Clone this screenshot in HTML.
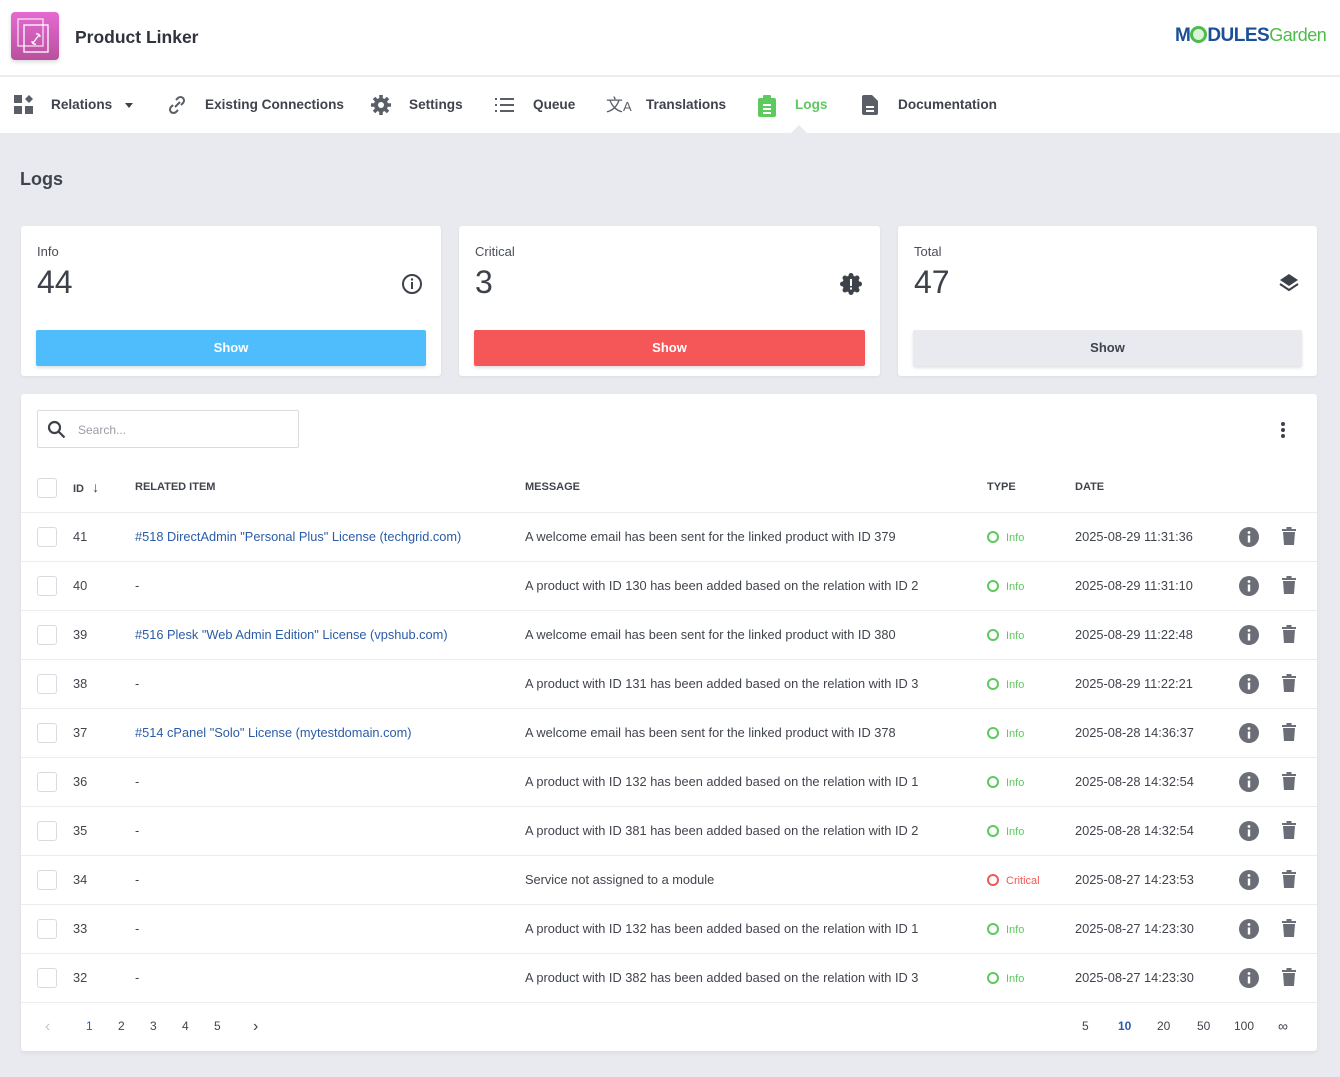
<!DOCTYPE html>
<html><head><meta charset="utf-8">
<style>
*{box-sizing:border-box;margin:0;padding:0}
body{width:1340px;height:1077px;background:#e9eaef;font-family:"Liberation Sans",sans-serif;color:#40444d;position:relative;overflow:hidden}
.abs{position:absolute}
.top{position:absolute;left:0;top:0;width:1340px;height:76px;background:#fff;border-bottom:1px solid #eceef1}
.nav{position:absolute;left:0;top:77px;width:1340px;height:56px;background:#fff}
.nav .it{position:absolute;top:0;height:56px;line-height:55px;font-size:13.6px;font-weight:bold;color:#3f434c}
.nav svg{position:absolute;top:18px}
.card{position:absolute;top:226px;height:150px;background:#fff;border-radius:3px;box-shadow:0 1px 3px rgba(0,0,0,.06)}
.card .lbl{position:absolute;left:16px;top:18px;font-size:13px;color:#4a4e57}
.card .num{position:absolute;left:16px;top:38px;font-size:32px;font-weight:300;color:#3d414a}
.card .btn{position:absolute;left:15px;right:15px;top:104px;height:36px;border-radius:2px;text-align:center;line-height:36px;font-size:13px;font-weight:bold;box-shadow:0 2px 3px rgba(0,0,0,.12)}
.card .ic{position:absolute;right:18px;top:47px}
.panel{position:absolute;left:21px;top:394px;width:1296px;height:657px;background:#fff;border-radius:3px;box-shadow:0 2px 4px rgba(0,0,0,.06)}
.row{position:absolute;left:0;width:1296px;height:49px;border-top:1px solid #ebecef;font-size:12.8px;color:#40444d}
.row span,.hdr span{position:absolute;top:0;line-height:47px;white-space:nowrap}
.cb{position:absolute;left:16px;top:14px;width:20px;height:20px;border:1px solid #d9dbe0;border-radius:3px;background:#fff}
.hdr{position:absolute;left:0;top:70px;width:1296px;height:49px;font-size:11px;font-weight:bold;color:#40444d}
a{color:#2b5ca8;text-decoration:none}
.dot{display:inline-block;width:12px;height:12px;border:2px solid #5dc95e;border-radius:50%;vertical-align:-2px;margin-right:7px}
.row span.ty{font-size:11px;color:#5dc95e;top:2px}
.crit .dot{border-color:#f35858}.row span.crit{color:#f35858}
.pg{position:absolute;top:608px;font-size:12px;color:#3f434c;line-height:49px}
</style></head><body>
<div class="top">
  <div class="abs" style="left:11px;top:12px;width:48px;height:48px;border-radius:4px;background:linear-gradient(#e46ad0,#b9509f);box-shadow:0 2px 4px rgba(0,0,0,.15)">
    <svg width="48" height="48" viewBox="0 0 48 48"><rect x="7" y="7" width="25" height="27" fill="none" stroke="#fff" stroke-width="1.3" opacity=".8"/><rect x="13" y="13" width="24" height="27" fill="none" stroke="#fff" stroke-width="1.3"/><path d="M22 31l6-8M21 29a3 3 0 0 0 4 3M29 25a3 3 0 0 0-4-3" stroke="#fff" stroke-width="1.3" fill="none"/></svg>
  </div>
  <div class="abs" style="left:75px;top:27px;font-size:17.5px;font-weight:bold;color:#2f333b">Product Linker</div>
  <div class="abs" style="left:1175px;top:25px;font-size:19px;font-weight:bold;color:#1b4f97;letter-spacing:-.5px">M<span style="display:inline-block;width:17px;height:17px;border:3px solid #4dbd4a;border-radius:50%;vertical-align:-2px;background:#4dbd4a33"></span>DULES<span style="font-weight:normal;color:#4dbd4a;font-size:18px">Garden</span></div>
</div>
<div class="nav">
  <svg style="left:14px" width="20" height="20" viewBox="0 0 20 20" fill="#5a5e66"><rect x="0" y="0" width="8" height="8"/><rect x="0" y="11" width="8" height="8"/><rect x="11" y="11" width="8" height="8"/><path d="M15 0l4 4-4 4-4-4z"/></svg>
  <div class="it" style="left:51px">Relations</div>
  <div class="abs" style="left:125px;top:26px;border:4px solid transparent;border-top:5px solid #3f434c"></div>
  <svg style="left:167px" width="20" height="20" viewBox="0 0 20 20" fill="none" stroke="#5a5e66" stroke-width="2"><path d="M8 12l5-5M9 5l2-2a3.5 3.5 0 0 1 5 5l-2 2M11 15l-2 2a3.5 3.5 0 0 1-5-5l2-2"/></svg>
  <div class="it" style="left:205px">Existing Connections</div>
  <svg style="left:371px" width="20" height="20" viewBox="0 0 20 20"><circle cx="10" cy="10" r="7" fill="#5a5e66"/><g stroke="#5a5e66" stroke-width="3.5"><path d="M10 0v20M0 10h20M3 3l14 14M17 3L3 17"/></g><circle cx="10" cy="10" r="3" fill="#fff"/></svg>
  <div class="it" style="left:409px">Settings</div>
  <svg style="left:495px" width="20" height="20" viewBox="0 0 20 20" fill="#5a5e66"><rect x="0" y="3" width="2" height="2"/><rect x="0" y="9" width="2" height="2"/><rect x="0" y="15" width="2" height="2"/><rect x="5" y="3" width="14" height="2"/><rect x="5" y="9" width="14" height="2"/><rect x="5" y="15" width="14" height="2"/></svg>
  <div class="it" style="left:533px">Queue</div>
  <div class="abs" style="left:606px;top:14px;font-size:17px;color:#5a5e66">文<span style="font-size:13px">A</span></div>
  <div class="it" style="left:646px">Translations</div>
  <svg style="left:758px" width="18" height="22" viewBox="0 0 18 22"><rect x="0" y="3" width="18" height="19" rx="2" fill="#5dc95e"/><rect x="5" y="0" width="8" height="5" rx="1" fill="#5dc95e"/><g fill="#fff"><rect x="5" y="9" width="8" height="2"/><rect x="5" y="13" width="8" height="2"/><rect x="5" y="17" width="8" height="2"/></g></svg>
  <div class="it" style="left:795px;color:#5dc95e">Logs</div>
  <div class="abs" style="left:791px;top:48px;border:8px solid transparent;border-bottom:8px solid #e9eaef;border-top:0"></div>
  <svg style="left:862px" width="16" height="20" viewBox="0 0 16 20"><path d="M0 2a2 2 0 0 1 2-2h8l6 6v12a2 2 0 0 1-2 2H2a2 2 0 0 1-2-2z" fill="#5a5e66"/><g fill="#fff"><rect x="4" y="11" width="8" height="2"/><rect x="4" y="15" width="8" height="2"/></g></svg>
  <div class="it" style="left:898px">Documentation</div>
</div>
<div class="abs" style="left:20px;top:169px;font-size:18px;font-weight:bold;color:#3f434c">Logs</div>

<div class="card" style="left:21px;width:420px"><div class="lbl">Info</div><div class="num">44</div>
<svg class="ic" width="22" height="22" viewBox="0 0 22 22"><circle cx="11" cy="11" r="9" fill="none" stroke="#3d414a" stroke-width="2"/><rect x="10" y="9" width="2" height="7" fill="#3d414a"/><circle cx="11" cy="6.5" r="1.2" fill="#3d414a"/></svg>
<div class="btn" style="background:#4fbdfc;color:#fff">Show</div></div>
<div class="card" style="left:459px;width:421px"><div class="lbl">Critical</div><div class="num">3</div>
<svg class="ic" width="22" height="22" viewBox="0 0 22 22"><circle cx="11" cy="11" r="8.5" fill="#3d414a"/><g fill="#3d414a"><circle cx="11" cy="2.5" r="2.5"/><circle cx="11" cy="19.5" r="2.5"/><circle cx="2.5" cy="11" r="2.5"/><circle cx="19.5" cy="11" r="2.5"/><circle cx="5" cy="5" r="2.5"/><circle cx="17" cy="5" r="2.5"/><circle cx="5" cy="17" r="2.5"/><circle cx="17" cy="17" r="2.5"/></g><rect x="10" y="6" width="2" height="7" fill="#fff"/><rect x="10" y="14.5" width="2" height="2" fill="#fff"/></svg>
<div class="btn" style="background:#f55758;color:#fff">Show</div></div>
<div class="card" style="left:898px;width:419px"><div class="lbl">Total</div><div class="num">47</div>
<svg class="ic" width="20" height="20" viewBox="0 0 20 20"><path d="M10 1l9 6-9 6-9-6z" fill="#3d414a"/><path d="M1 11l9 6 9-6" fill="none" stroke="#3d414a" stroke-width="2"/></svg>
<div class="btn" style="background:#e9eaef;color:#3f434c;font-weight:bold">Show</div></div>

<div class="panel">
  <div class="abs" style="left:16px;top:16px;width:262px;height:38px;border:1px solid #d9dbe0;border-radius:2px">
    <svg class="abs" style="left:9px;top:9px" width="19" height="19" viewBox="0 0 19 19" fill="none" stroke="#3d414a" stroke-width="2.2"><circle cx="7.5" cy="7.5" r="5.5"/><path d="M11.5 11.5l6 6"/></svg>
    <div class="abs" style="left:40px;top:12px;font-size:12px;color:#9a9ea6">Search...</div>
  </div>
  <svg class="abs" style="left:1259px;top:27px" width="6" height="18"><circle cx="3" cy="3" r="2" fill="#3d414a"/><circle cx="3" cy="9" r="2" fill="#3d414a"/><circle cx="3" cy="15" r="2" fill="#3d414a"/></svg>
  <div class="hdr"><div class="cb"></div><span style="left:52px">ID <span style="position:static;font-weight:normal;font-size:14px;margin-left:5px">↓</span></span><span style="left:114px">RELATED ITEM</span><span style="left:504px">MESSAGE</span><span style="left:966px">TYPE</span><span style="left:1054px">DATE</span></div>
  <div id="rows"></div>
  <div class="abs" style="left:0;top:608px;width:1296px;border-top:1px solid #ebecef"></div>
  <div class="pg" style="left:24px;color:#c4c6cc;font-size:16px">‹</div>
  <div class="pg" style="left:65px;color:#2b5ca8">1</div><div class="pg" style="left:97px">2</div><div class="pg" style="left:129px">3</div><div class="pg" style="left:161px">4</div><div class="pg" style="left:193px">5</div>
  <div class="pg" style="left:232px;font-size:16px">›</div>
  <div class="pg" style="left:1061px">5</div><div class="pg" style="left:1097px;color:#2b5ca8;font-weight:bold">10</div><div class="pg" style="left:1136px">20</div><div class="pg" style="left:1176px">50</div><div class="pg" style="left:1213px">100</div><div class="pg" style="left:1257px;font-size:14px">∞</div>
</div>
<script>
var d=[["41",'<a>#518 DirectAdmin "Personal Plus" License (techgrid.com)</a>',"A welcome email has been sent for the linked product with ID 379",0,"2025-08-29 11:31:36"],
["40","-","A product with ID 130 has been added based on the relation with ID 2",0,"2025-08-29 11:31:10"],
["39",'<a>#516 Plesk "Web Admin Edition" License (vpshub.com)</a>',"A welcome email has been sent for the linked product with ID 380",0,"2025-08-29 11:22:48"],
["38","-","A product with ID 131 has been added based on the relation with ID 3",0,"2025-08-29 11:22:21"],
["37",'<a>#514 cPanel "Solo" License (mytestdomain.com)</a>',"A welcome email has been sent for the linked product with ID 378",0,"2025-08-28 14:36:37"],
["36","-","A product with ID 132 has been added based on the relation with ID 1",0,"2025-08-28 14:32:54"],
["35","-","A product with ID 381 has been added based on the relation with ID 2",0,"2025-08-28 14:32:54"],
["34","-","Service not assigned to a module",1,"2025-08-27 14:23:53"],
["33","-","A product with ID 132 has been added based on the relation with ID 1",0,"2025-08-27 14:23:30"],
["32","-","A product with ID 382 has been added based on the relation with ID 3",0,"2025-08-27 14:23:30"]];
var h="";
d.forEach(function(r,i){
h+='<div class="row" style="top:'+(118+i*49)+'px"><div class="cb"></div><span style="left:52px">'+r[0]+'</span><span style="left:114px">'+r[1]+'</span><span style="left:504px">'+r[2]+'</span><span class="ty'+(r[3]?' crit':'')+'" style="left:966px"><i class="dot"></i>'+(r[3]?'Critical':'Info')+'</span><span style="left:1054px">'+r[4]+'</span>'+
'<svg style="position:absolute;left:1218px;top:14px" width="20" height="20" viewBox="0 0 20 20"><circle cx="10" cy="10" r="10" fill="#6b6e76"/><rect x="8.8" y="8.5" width="2.4" height="7" fill="#fff"/><circle cx="10" cy="5.5" r="1.4" fill="#fff"/></svg>'+
'<svg style="position:absolute;left:1261px;top:14px" width="14" height="18" viewBox="0 0 14 18" fill="#6b6e76"><rect x="0" y="2" width="14" height="2"/><rect x="4.5" y="0" width="5" height="2"/><path d="M1 5h12l-1 13H2z"/></svg></div>';});
document.getElementById("rows").innerHTML=h;
</script>
</body></html>
